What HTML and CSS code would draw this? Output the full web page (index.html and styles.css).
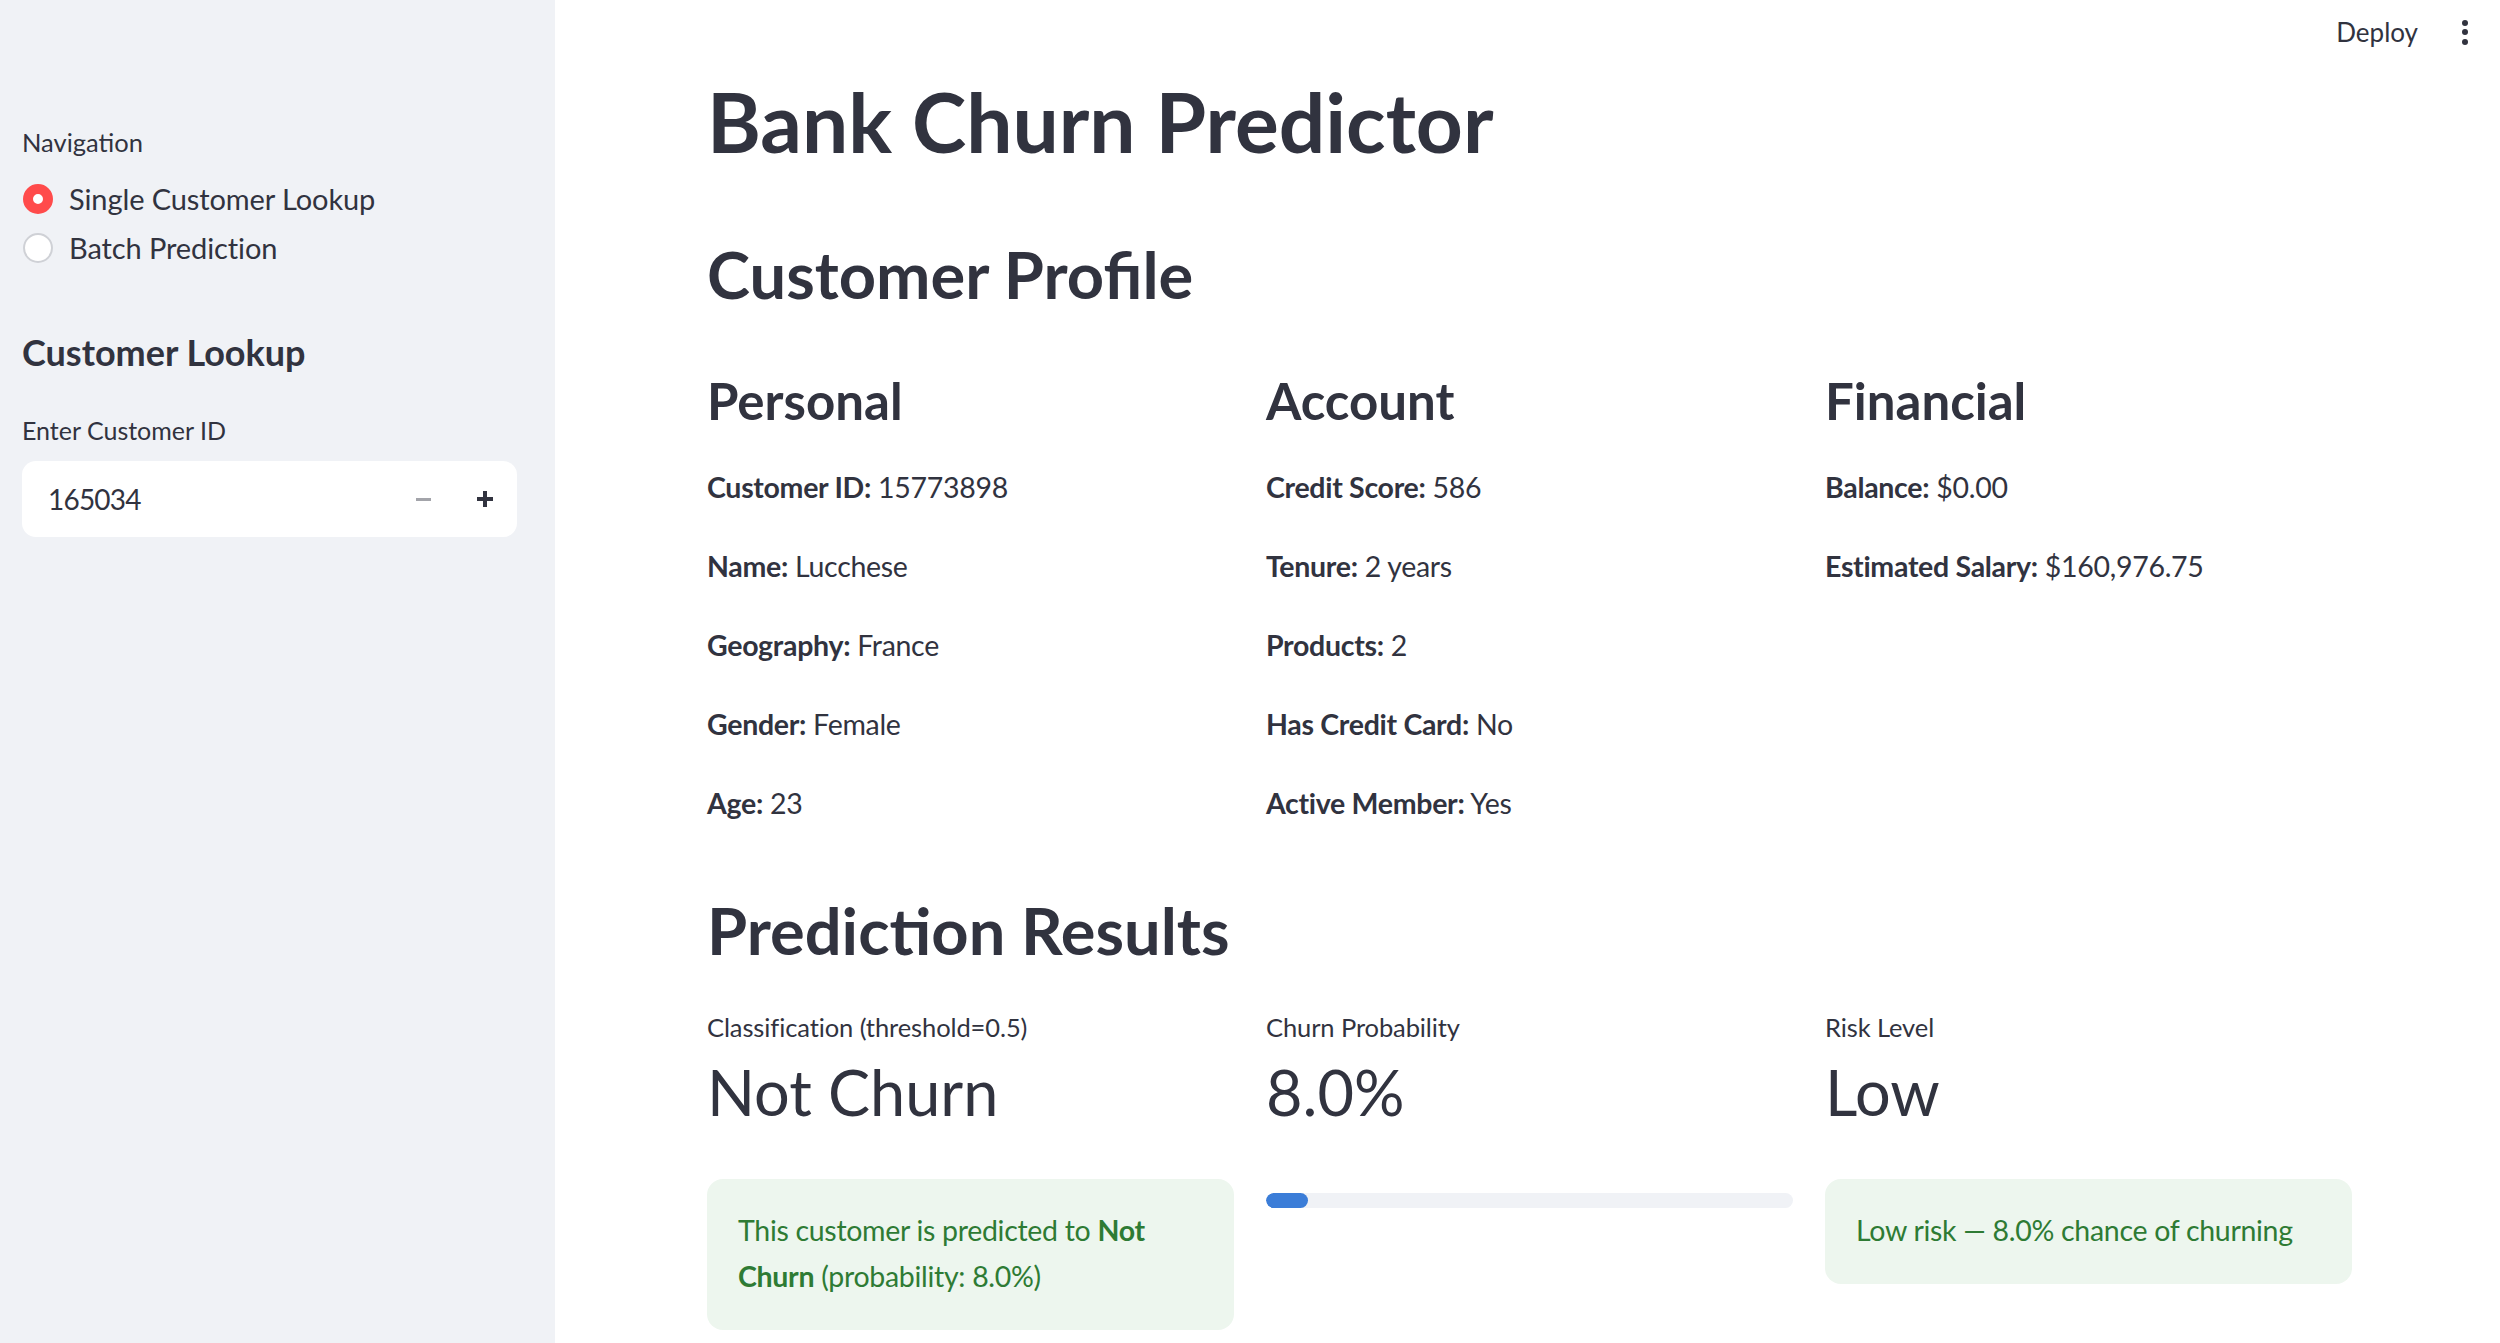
FILE: index.html
```html
<!DOCTYPE html>
<html lang="en">
<head>
<meta charset="utf-8">
<title>Bank Churn Predictor</title>
<link rel="stylesheet" href="styles.css">
</head>
<body>
<div class="app">
  <aside class="sidebar">
    <div class="nav-label">Navigation</div>
    <div class="radio-group">
      <div class="radio-row"><span class="radio checked"></span><span class="radio-text">Single Customer Lookup</span></div>
      <div class="radio-row"><span class="radio"></span><span class="radio-text">Batch Prediction</span></div>
    </div>
    <h2 class="side-heading">Customer Lookup</h2>
    <div class="input-label">Enter Customer ID</div>
    <div class="num-input">
      <span class="num-value">165034</span>
      <span class="step minus"></span>
      <span class="step plus"></span>
    </div>
  </aside>
  <main class="main">
    <header class="topbar">
      <span class="deploy">Deploy</span>
      <span class="kebab"><i></i><i></i><i></i></span>
    </header>
    <div class="content">
      <h1 class="title">Bank Churn Predictor</h1>
      <h2 class="section first">Customer Profile</h2>
      <div class="cols">
        <div class="col">
          <h3 class="col-head">Personal</h3>
          <p class="field"><b>Customer ID:</b> 15773898</p>
          <p class="field"><b>Name:</b> Lucchese</p>
          <p class="field"><b>Geography:</b> France</p>
          <p class="field"><b>Gender:</b> Female</p>
          <p class="field"><b>Age:</b> 23</p>
        </div>
        <div class="col">
          <h3 class="col-head">Account</h3>
          <p class="field"><b>Credit Score:</b> 586</p>
          <p class="field"><b>Tenure:</b> 2 years</p>
          <p class="field"><b>Products:</b> 2</p>
          <p class="field"><b>Has Credit Card:</b> No</p>
          <p class="field"><b>Active Member:</b> Yes</p>
        </div>
        <div class="col">
          <h3 class="col-head">Financial</h3>
          <p class="field"><b>Balance:</b> $0.00</p>
          <p class="field"><b>Estimated Salary:</b> $160,976.75</p>
        </div>
      </div>
      <h2 class="section second">Prediction Results</h2>
      <div class="cols results">
        <div class="col">
          <div class="metric-label">Classification (threshold=0.5)</div>
          <div class="metric-value">Not Churn</div>
          <div class="alert">This customer is predicted to <b>Not Churn</b> (probability: 8.0%)</div>
        </div>
        <div class="col">
          <div class="metric-label">Churn Probability</div>
          <div class="metric-value">8.0%</div>
          <div class="progress"><div class="progress-fill" style="width: 8%"></div></div>
        </div>
        <div class="col">
          <div class="metric-label">Risk Level</div>
          <div class="metric-value">Low</div>
          <div class="alert single">Low risk — 8.0% chance of churning</div>
        </div>
      </div>
    </div>
  </main>
</div>
</body>
</html>
```

FILE: styles.css
```css
* { box-sizing: border-box; }
html, body { margin: 0; padding: 0; }
body {
  font-family: Lato, "Noto Sans", sans-serif;
  color: #31333f;
  background: #ffffff;
  width: 2500px;
  height: 1343px;
  overflow: hidden;
}
.app { display: flex; height: 1343px; }

/* Sidebar */
.sidebar {
  width: 555px;
  flex: none;
  background: #f0f2f6;
  padding: 124px 38px 0 22px;
  display: flex;
  flex-direction: column;
}
.nav-label { font-size: 25.5px; line-height: 36px; }
.radio-group { margin-top: 14px; display: flex; flex-direction: column; }
.radio-row { display: flex; align-items: center; height: 49px; gap: 16px; }
.radio {
  width: 30px; height: 30px; border-radius: 50%;
  background: #ffffff; border: 2px solid #cfd1d6; flex: none;
  margin-left: 1px;
}
.radio.checked { background: #ffffff; border: 10px solid #ff4b4b; }
.radio-text { font-size: 29px; line-height: 49px; letter-spacing: -0.1px; }
.side-heading {
  margin: 57px 0 0;
  font-size: 36px; line-height: 46px; font-weight: 700;
}
.input-label { margin-top: 37px; font-size: 25px; line-height: 36px; }
.num-input {
  margin-top: 13px;
  height: 76px;
  background: #ffffff;
  border-radius: 14px;
  display: flex; align-items: center;
  padding: 0 24px 0 26px;
}
.num-value { font-size: 28px; letter-spacing: -0.8px; flex: 1; }
.step { position: relative; width: 16px; height: 16px; }
.minus { margin-right: 45px; }
.minus::before {
  content: ""; position: absolute; left: 0; top: 7px; width: 15px; height: 3px; background: #a3a4aa;
}
.plus::before {
  content: ""; position: absolute; left: 0; top: 6px; width: 16px; height: 4px; background: #31333f;
}
.plus::after {
  content: ""; position: absolute; left: 6px; top: 0; width: 4px; height: 16px; background: #31333f;
}

/* Main */
.main { flex: 1; display: flex; flex-direction: column; }
.topbar {
  height: 64px;
  display: flex; align-items: center; justify-content: flex-end;
  padding-right: 32px;
  gap: 44px;
}
.deploy { font-size: 26px; }
.kebab { display: flex; flex-direction: column; gap: 3.5px; }
.kebab i { display: block; width: 6px; height: 6px; border-radius: 50%; background: #31333f; }

.content { padding: 9px 148px 0 152px; }
.title {
  margin: 0; font-size: 82px; line-height: 96px; font-weight: 700;
}
.section { margin: 0; font-size: 65px; line-height: 80px; font-weight: 700; }
.section.first { margin-top: 65px; }
.section.second { margin-top: 47px; }
.cols {
  display: grid;
  grid-template-columns: repeat(3, 1fr);
  column-gap: 32px;
}
.col-head {
  margin: 55px 0 15px; font-size: 51px; line-height: 64px; font-weight: 700;
}
.field { margin: 0; font-size: 28.5px; line-height: 79px; letter-spacing: -0.3px; }
.field b { font-weight: 700; }

.results { margin-top: 39px; }
.metric-label { font-size: 25.5px; line-height: 36px; letter-spacing: -0.1px; }
.metric-value { margin-top: 7px; font-size: 63px; line-height: 80px; }
.alert {
  margin-top: 47px;
  background: #edf6ee;
  color: #2e7b34;
  border-radius: 16px;
  padding: 28px 31px 31px;
  font-size: 28.5px; line-height: 46px; letter-spacing: -0.3px;
}
.alert.single { white-space: nowrap; }
.alert b { font-weight: 700; }
.progress {
  margin-top: 61px;
  height: 15px;
  border-radius: 8px;
  background: #f0f2f6;
  overflow: hidden;
}
.progress-fill { height: 100%; background: #3b7dd8; border-radius: 8px; }
```
